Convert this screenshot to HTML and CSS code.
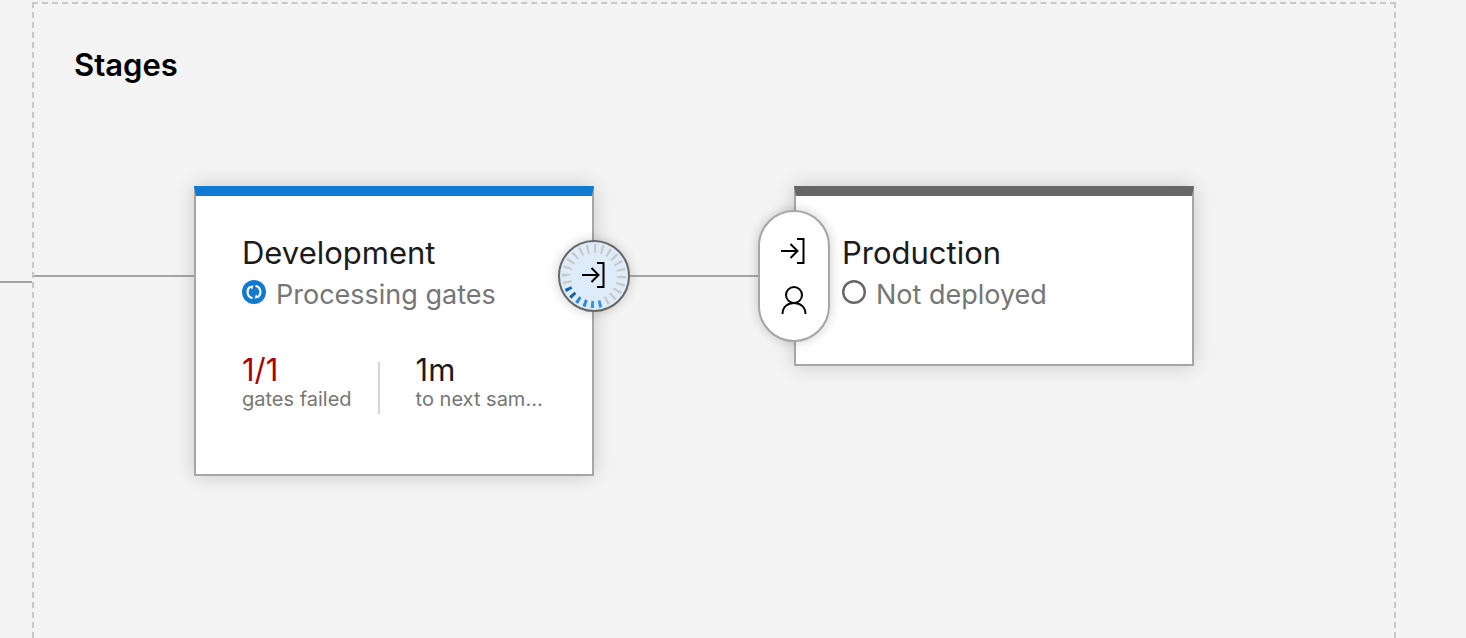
FILE: index.html
```html
<!DOCTYPE html>
<html lang="en">
<head>
  <meta charset="UTF-8">
  <meta name="viewport" content="width=device-width, initial-scale=1.0">
  <title>Stages</title>
  <link rel="stylesheet" href="styles.css">
</head>
<body>
  <main class="pipeline">
    <div class="incoming"></div>

    <section class="stages">
      <h2 class="stages-title">Stages</h2>

      <div class="stage-row">
        <div class="connector connector-in"></div>

        <article class="stage stage-active">
          <h3 class="stage-name">Development</h3>
          <p class="stage-status">
            <svg class="status-icon" viewBox="0 0 24 24" aria-hidden="true">
              <circle cx="12" cy="12" r="12" fill="#1279d1"/>
              <g fill="none" stroke="#fff" stroke-width="2">
                <path d="M10.500 18.300A6.500 6.500 0 0 1 7.500 7.300"/>
                <path d="M13.500 5.700A6.500 6.500 0 0 1 16.500 16.700"/>
              </g>
              <path d="M6.800 6.300l4.700-.8-1.500 4z" fill="#fff"/>
              <path d="M17.200 17.700l-4.700.8 1.500-4z" fill="#fff"/>
            </svg>
            Processing gates
          </p>
          <div class="stats">
            <div class="stat">
              <span class="stat-value failed">1/1</span>
              <span class="stat-label">gates failed</span>
            </div>
            <div class="stat-divider"></div>
            <div class="stat">
              <span class="stat-value">1m</span>
              <span class="stat-label">to next sam…</span>
            </div>
          </div>

          <button class="gate gate-post" type="button" aria-label="Post-deployment conditions">
            <svg class="gate-ring" viewBox="0 0 68 68" aria-hidden="true">
              <g fill="none" stroke-width="9">
                <circle cx="34" cy="34" r="27.500" pathLength="240" stroke="#c8c8c8" stroke-dasharray="3 7 3 7 3 7 3 7 3 67 3 7 3 7 3 7 3 7 3 7 3 7 3 7 3 7 3 7 3 7 3 7 3 7 3 7"/>
              </g>
              <g fill="none" stroke-width="7">
                <circle cx="34" cy="34" r="28.500" pathLength="240" stroke="#3a93e0" stroke-dasharray="0 50 4 6 4 176"/>
                <circle cx="34" cy="34" r="28.500" pathLength="240" stroke="#2b88d8" stroke-dasharray="0 70 4 6 4 156"/>
                <circle cx="34" cy="34" r="28.500" pathLength="240" stroke="#0f64ad" stroke-dasharray="0 90 4 6 4 136"/>
              </g>
            </svg>
            <svg class="gate-icon" viewBox="0 0 28 28" aria-hidden="true">
              <path d="M2 13h17M11.500 6l7 7-7 7M17 1h6.500v24H17"/>
            </svg>
          </button>
        </article>

        <div class="connector connector-between"></div>

        <article class="stage stage-idle">
          <h3 class="stage-name">Production</h3>
          <p class="stage-status">
            <svg class="status-icon" viewBox="0 0 24 24" aria-hidden="true">
              <circle cx="12" cy="12" r="10.800" fill="none" stroke="#666" stroke-width="2.400"/>
            </svg>
            Not deployed
          </p>

          <button class="gate gate-pre" type="button" aria-label="Pre-deployment conditions">
            <svg class="gate-icon" viewBox="0 0 28 28" aria-hidden="true">
              <path d="M1 13h17M10.500 6l7 7-7 7M17 1h6.500v24H17"/>
            </svg>
            <svg class="gate-icon" viewBox="0 0 28 28" aria-hidden="true">
              <circle cx="14" cy="9" r="8"/>
              <path d="M2.500 28c0-7 5-11 11.500-11S25.500 21 25.500 28"/>
            </svg>
          </button>
        </article>
      </div>
    </section>
  </main>
</body>
</html>
```

FILE: styles.css
```css
* {
  box-sizing: border-box;
}
body {
  margin: 0;
  background-color: #f4f4f4;
  color: #1b1b1b;
  font-family: Inter, "Liberation Sans", sans-serif;
}
h2,
h3,
p {
  margin: 0;
  font-weight: 400;
}
.pipeline {
  display: flex;
  min-height: 100vh;
  padding: 2px 70px 0 0;
}
.incoming {
  width: 32px;
  height: 2px;
  margin-top: 279px;
  background-color: #a6a6a6;
}
.stages {
  flex: 1;
  border: 2px dashed #c8c8c8;
  border-bottom: none;
}
.stages-title {
  padding: 40px 40px 0;
  color: #000;
  font-size: 31px;
  font-weight: 600;
  line-height: 42px;
}

/* stages and the lines between them */
.stage-row {
  display: flex;
  align-items: flex-start;
  margin-top: 100px;
}
.connector {
  flex: none;
  height: 2px;
  margin-top: 89px;
  background-color: #a6a6a6;
}
.connector-in {
  width: 160px;
}
.connector-between {
  width: 200px;
}
.stage {
  position: relative;
  flex: none;
  width: 400px;
  padding: 36px 46px 48px;
  border: 2px solid #a6a6a6;
  border-top: 10px solid #666;
  background-color: #fff;
  box-shadow: 0 0 20px rgba(0, 0, 0, 0.18);
}
.stage-active {
  padding-bottom: 60px;
  border-top-color: #1279d1;
}
.stage-name {
  font-size: 31px;
  line-height: 42px;
}
.stage-status {
  display: flex;
  align-items: flex-start;
  gap: 10px;
  color: #767676;
  font-size: 27px;
  line-height: 42px;
}
.status-icon {
  flex: none;
  width: 24px;
  height: 24px;
  margin-top: 6px;
}

.stats {
  display: flex;
  align-items: flex-start;
  margin-top: 36px;
}
.stat-divider {
  width: 2px;
  height: 52px;
  margin: 10px 36px 0 26px;
  background-color: #d6d6d6;
}
.stat-value,
.stat-label {
  display: block;
}
.stat-value {
  font-size: 31px;
  line-height: 36px;
}
.stat-label {
  color: #767676;
  font-size: 20px;
  line-height: 22px;
  white-space: nowrap;
}
.failed {
  color: #a80000;
}

/* condition buttons on the card edges */
.gate {
  position: absolute;
  display: flex;
  flex-direction: column;
  align-items: center;
  justify-content: center;
  gap: 20px;
  width: 72px;
  padding: 0;
  border: 2px solid #a6a6a6;
  border-radius: 36px;
  background-color: #fff;
  box-shadow: 0 0 12px rgba(0, 0, 0, 0.2);
  cursor: pointer;
}
.gate-post {
  top: 44px;
  right: -38px;
  height: 72px;
  border-color: #666;
  background-color: #deecf9;
}
.gate-pre {
  top: 14px;
  left: -38px;
  height: 132px;
}
.gate-ring {
  position: absolute;
  inset: 0;
}
.gate-icon {
  width: 28px;
  height: 28px;
  fill: none;
  stroke: #000;
  stroke-width: 2;
}
```
